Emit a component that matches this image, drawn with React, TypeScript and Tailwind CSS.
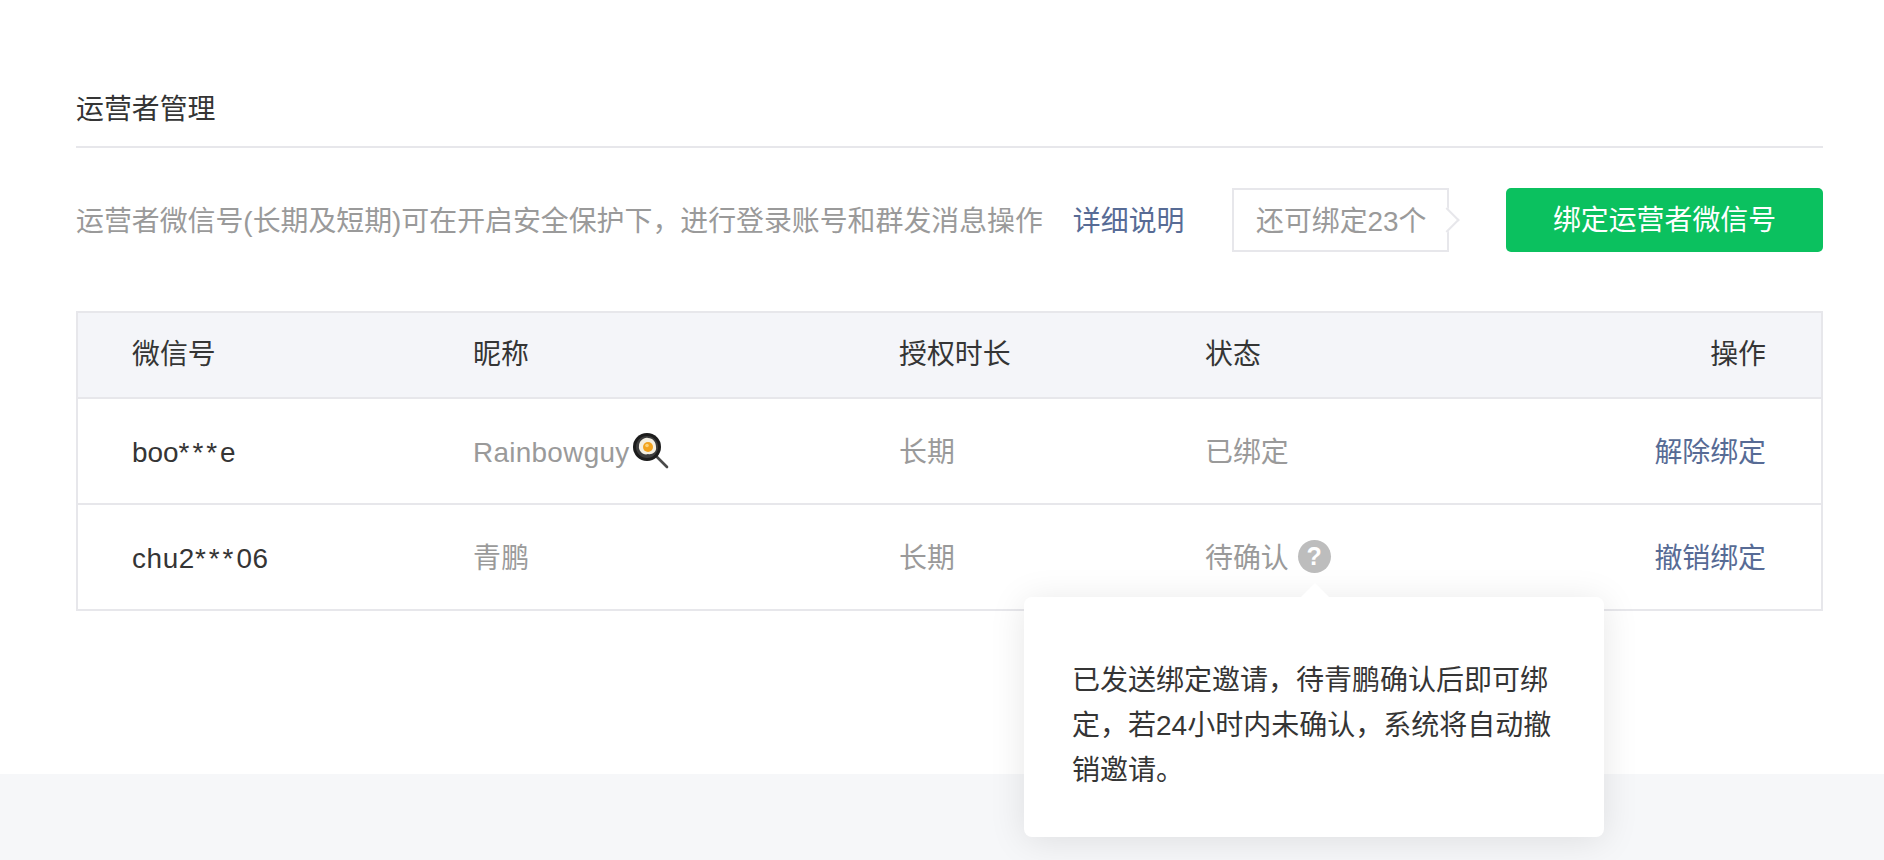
const cjk = "font-['Liberation_Sans','Noto_Sans_CJK_SC',sans-serif]";

function PanEmoji() {
  return (
    <svg width="36" height="36" viewBox="0 0 36 36" className="shrink-0 ml-[3px] -mt-[3px]">
      <path d="M23 23 L34 34" stroke="#4a4a4a" strokeWidth="2.6" strokeLinecap="round" />
      <circle cx="14" cy="14" r="14" fill="#1c1c1c" />
      <circle cx="14" cy="14" r="11" fill="#3d3d3d" />
      <path d="M6 13 C6 8 11 4 15 5 C20 5 23 9 23 14 C24 19 19 22 15 21 C11 23 5 18 6 13 Z" fill="#f4efe2" />
      <circle cx="15" cy="14" r="5" fill="#f2a31f" />
      <circle cx="14" cy="12.5" r="1.8" fill="#fad27a" />
    </svg>
  );
}

const rows = [
  { id: ["boo", "e"], idCls: "", nick: "Rainbowguy", term: "长期", status: "已绑定", action: "解除绑定" },
  { id: ["chu2", "06"], idCls: "tracking-[0.6px]", nick: "青鹏", term: "长期", status: "待确认", action: "撤销绑定" },
];

export default function App() {
  return (
    <div className={`relative min-h-[860px] bg-white flex flex-col overflow-hidden ${cjk}`}>
      <div className="h-[774px] pl-[76px] pr-[61px] pt-[90px] shrink-0 w-[1884px]">
        <div className="h-[58px] border-b-2 border-[#e7e7eb] text-[27.9px] leading-[40px] text-[#353535]">运营者管理</div>

        <div className="mt-[40px] flex items-center h-[64px]">
          <span className="pt-[4px] text-[27.9px] text-[#9a9a9a]">运营者微信号(长期及短期)可在开启安全保护下，进行登录账号和群发消息操作</span>
          <a className="ml-[30px] pt-[4px] text-[27.9px] text-[#576b95]">详细说明</a>
          <div className="relative ml-auto mr-[57px] h-[64px] w-[217px] border-2 border-[#e7e7eb] flex items-center pl-[22px] pt-[3px] text-[27.9px] text-[#9a9a9a]">
            还可绑定23个
            <div className="absolute right-[-9px] top-[21px] w-[18px] h-[18px] rotate-45 bg-white border-t-2 border-r-2 border-[#e7e7eb]" />
          </div>
          <button className="w-[317px] h-[64px] pt-[2px] rounded-[5px] bg-[#0bc15f] text-white text-[27.9px]">绑定运营者微信号</button>
        </div>

        <div className="mt-[59px] border-2 border-[#e7e7eb]">
          <div className="flex items-center h-[84px] bg-[#f4f5f9] pl-[54px] pr-[55px] text-[27.9px] text-[#353535]">
            <div className="w-[341px]">微信号</div>
            <div className="w-[426px]">昵称</div>
            <div className="w-[306px]">授权时长</div>
            <div>状态</div>
            <div className="ml-auto">操作</div>
          </div>
          {rows.map((r, i) => (
            <div key={r.nick} className="flex items-center h-[106px] pt-[4px] border-t-2 border-[#e7e7eb] pl-[54px] pr-[55px] text-[27.9px] text-[#9a9a9a]">
              <div className={`w-[341px] text-[#353535] ${r.idCls}`}>
                {r.id[0]}
                <span className="tracking-[3px]">***</span>
                {r.id[1]}
              </div>
              <div className="w-[426px] flex items-center tracking-[0.3px]">
                {r.nick}
                {i === 0 && <PanEmoji />}
              </div>
              <div className="w-[306px]">{r.term}</div>
              <div className="flex items-center gap-[9px]">
                {r.status}
                {i === 1 && (
                  <span className="w-[33px] h-[33px] -mt-[4px] rounded-full bg-[#bdbdbd] text-white text-[25px] font-bold flex items-center justify-center">?</span>
                )}
              </div>
              <a className="ml-auto text-[#576b95]">{r.action}</a>
            </div>
          ))}
        </div>
      </div>

      <div className="flex-1 h-[86px] bg-[#f6f7f9]" />

      <div className="absolute left-[1024px] top-[597px] w-[580px] h-[240px] bg-white rounded-[8px] shadow-[0_4px_36px_rgba(0,0,0,0.1)] pl-[48px] pr-[40px] pt-[61px] text-[28px] leading-[45px] text-[#353535]">
        <div className="absolute left-[277px] top-[-14px] w-0 h-0 border-x-[14px] border-x-transparent border-b-[14px] border-b-white" />
        已发送绑定邀请，待青鹏确认后即可绑定，若24小时内未确认，系统将自动撤销邀请。
      </div>
    </div>
  );
}
